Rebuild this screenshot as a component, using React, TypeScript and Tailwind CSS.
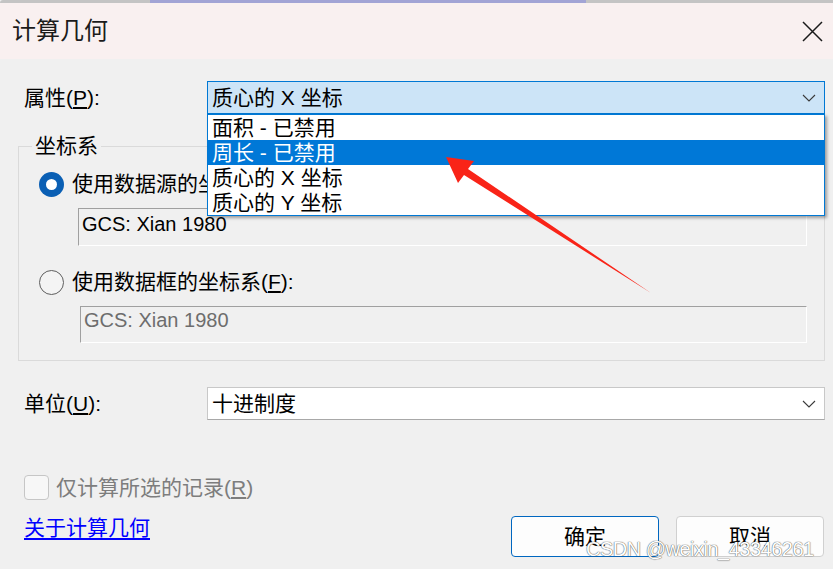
import React from "react";

function Chevron() {
  return (
    <svg width="14" height="8" viewBox="0 0 14 8" className="shrink-0">
      <path d="M1 1L7 7L13 1" fill="none" stroke="#3a3a3a" strokeWidth="1.1" />
    </svg>
  );
}

function Key({ k }: { k: string }) {
  return <span className="underline underline-offset-2">{k}</span>;
}

const options = ["面积 - 已禁用", "周长 - 已禁用", "质心的 X 坐标", "质心的 Y 坐标"];

export default function App() {
  return (
    <div className="relative h-[569px] w-[833px] overflow-hidden bg-[#f0f0f0] font-['Liberation_Sans','Noto_Sans_CJK_SC',sans-serif] text-[21px] leading-[24px] text-black">
      {/* window edge behind */}
      <div className="flex h-[3px]">
        <div className="w-[150px] rounded-tl-[6px] bg-[#c4c4c4]" />
        <div className="w-[436px] bg-[#a2a4d5]" />
        <div className="flex-1 bg-[#c4c4c4]" />
      </div>

      {/* title bar */}
      <div className="flex h-[56px] items-center justify-between bg-[#f9f0f0] pl-[12px] pr-[10px]">
        <span className="text-[24px] leading-[28px] text-[#1b1b1b]">计算几何</span>
        <svg width="21" height="21" viewBox="0 0 21 21">
          <path d="M1 1L20 20M20 1L1 20" stroke="#1a1a1a" strokeWidth="1.5" />
        </svg>
      </div>

      <div className="flex flex-col">
        {/* 属性 */}
        <div className="mt-[22px] flex h-[33px] items-center">
          <div className="w-[207px] pl-[24px]">
            属性(<Key k="P" />):
          </div>
          <div className="relative h-full w-[618px]">
            <div className="flex h-full items-center justify-between border border-[#0078d4] bg-[#cce4f7] pl-[4px] pr-[8px]">
              <span>质心的 X 坐标</span>
              <Chevron />
            </div>
            <ul className="absolute left-0 top-full z-10 w-full border border-[#0078d4] bg-white shadow-[2px_2px_3px_rgba(0,0,0,0.35)]">
              {options.map((o, i) => (
                <li
                  key={o}
                  className={
                    i === 1
                      ? "flex h-[25px] items-center bg-[#0078d7] pl-[4px] text-white"
                      : "flex h-[25px] items-center pl-[4px]"
                  }
                >
                  {o}
                </li>
              ))}
            </ul>
          </div>
        </div>

        {/* 坐标系 group */}
        <div className="relative ml-[18px] mt-[32px] flex h-[215px] w-[807px] flex-col border border-[#dadada]">
          <span className="absolute -top-[13px] left-[13px] bg-[#f0f0f0] px-[3px]">坐标系</span>

          <div className="ml-[20px] mt-[23px] flex h-[28px] items-center gap-[8px]">
            <div className="flex h-[25px] w-[25px] items-center justify-center rounded-full bg-[#0a5fb4]">
              <div className="h-[11px] w-[11px] rounded-full bg-white" />
            </div>
            <span>
              使用数据源的坐标系(<Key k="S" />):
            </span>
          </div>
          <div className="ml-[59px] mt-[10px] h-[38px] w-[729px] border border-b-white border-l-[#a0a0a0] border-r-white border-t-[#a0a0a0] pl-[3px] pt-[3px] text-[20px]">
            GCS: Xian 1980
          </div>

          <div className="ml-[20px] mt-[22px] flex h-[28px] items-center gap-[8px]">
            <div className="h-[25px] w-[25px] rounded-full border border-[#5e5e5e] bg-[#f4f4f4]" />
            <span>
              使用数据框的坐标系(<Key k="F" />):
            </span>
          </div>
          <div className="ml-[61px] mt-[10px] h-[37px] w-[727px] border border-b-white border-l-[#a0a0a0] border-r-white border-t-[#a0a0a0] pl-[3px] pt-[1px] text-[20px] text-[#6d6d6d]">
            GCS: Xian 1980
          </div>
        </div>

        {/* 单位 */}
        <div className="mt-[26px] flex h-[33px] items-center">
          <div className="w-[207px] pl-[24px]">
            单位(<Key k="U" />):
          </div>
          <div className="flex h-full w-[618px] items-center justify-between border border-[#c8c8c8] border-b-[#a8a8a8] bg-white pl-[4px] pr-[8px]">
            <span>十进制度</span>
            <Chevron />
          </div>
        </div>

        {/* checkbox */}
        <div className="ml-[24px] mt-[55px] flex h-[25px] items-center gap-[7px] text-[#7d7d7d]">
          <div className="h-[25px] w-[25px] rounded-[4px] border border-[#c6c6c6] bg-[#f7f7f7]" />
          <span>
            仅计算所选的记录(<Key k="R" />)
          </span>
        </div>

        {/* footer */}
        <div className="mt-[16px] flex h-[41px] items-start justify-between pl-[24px] pr-[9px]">
          <a className="text-[#0000ff] underline underline-offset-[3px]">关于计算几何</a>
          <div className="flex gap-[17px]">
            <button className="flex h-[41px] w-[148px] items-center justify-center rounded-[4px] border border-[#0067c0] bg-[#fdfdfd]">
              确定
            </button>
            <button className="flex h-[41px] w-[148px] items-center justify-center rounded-[4px] border border-[#d0d0d0] bg-[#fdfdfd]">
              取消
            </button>
          </div>
        </div>
      </div>

      {/* red annotation arrow */}
      <svg className="pointer-events-none absolute left-0 top-0 z-20" width="833" height="569" viewBox="0 0 833 569">
        <polygon
          points="446,157 474,161 468,169 651,293 464,175 458,183"
          fill="#f92418"
        />
      </svg>

      {/* watermark */}
      <span className="absolute left-[586px] top-[539px] z-30 font-['Liberation_Sans',sans-serif] text-[20px] leading-[20px] tracking-[-0.5px] text-white [text-shadow:0_0_1px_#555,0_0_1px_#555]">
        CSDN @weixin_43346261
      </span>
    </div>
  );
}
